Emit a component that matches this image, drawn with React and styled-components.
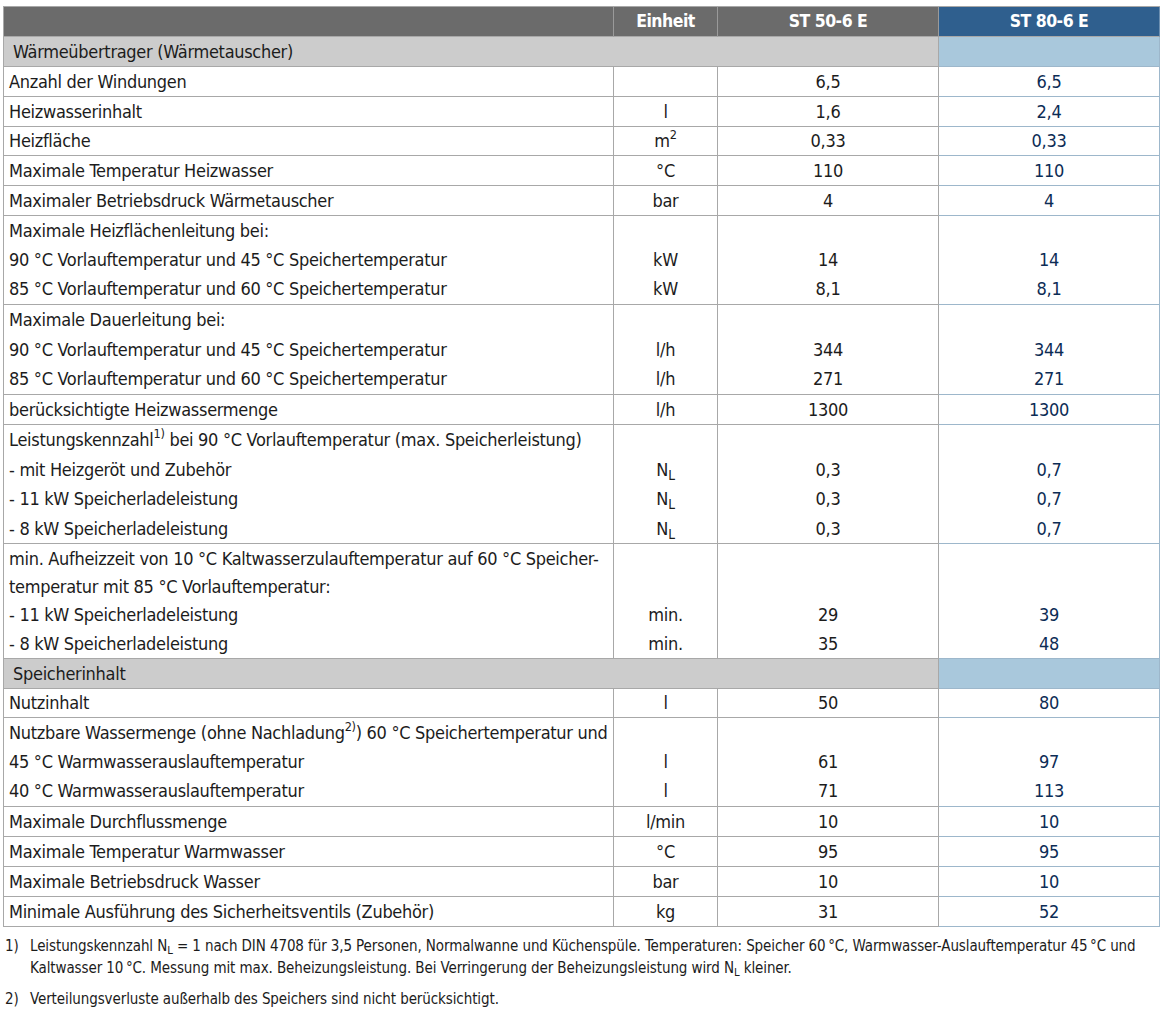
import styled, { createGlobalStyle } from 'styled-components'

const GlobalStyle = createGlobalStyle`
    body {
        margin: 0;
        background: #fff;
        font-family: "Liberation Sans Narrow", "DejaVu Sans Condensed", Roboto, sans-serif;
        color: #1c1c1c;
    }
`

const Page = styled.div`
    padding: 6px 4px 0 3px;
    width: 1157px;
`

const Table = styled.div`
    border-top: 1px solid #a8a8a8;
    border-left: 1px solid #a8a8a8;
`

const Row = styled.div`
    display: grid;
    grid-template-columns: 610px 104px 221px 221px;
`

const HeadCell = styled.div`
    height: 29px;
    background: ${p => p.blue ? '#2f5f8e' : '#6b6b6b'};
    border-right: 1px solid ${p => p.blue ? '#6d8fb0' : '#9a9a9a'};
    border-bottom: 1px solid #a8a8a8;
    color: #fff;
    font-weight: bold;
    font-size: 17.5px;
    letter-spacing: -0.5px;
    line-height: 29px;
    text-align: center;
`

const SectionCell = styled.div`
    grid-column: ${p => p.wide ? '1 / 4' : 'auto'};
    height: 29px;
    background: ${p => p.blue ? '#a9c8dc' : '#cccccc'};
    border-right: 1px solid ${p => p.blue ? '#9db7cb' : '#a8a8a8'};
    border-bottom: 1px solid ${p => p.blue ? '#9db7cb' : '#a8a8a8'};
    padding-left: 9px;
    font-size: 18px;
    letter-spacing: -0.3px;
    line-height: 29px;
`

const Cell = styled.div`
    border-right: 1px solid ${p => p.blue ? '#9db7cb' : '#a8a8a8'};
    border-bottom: 1px solid ${p => p.blue ? '#9db7cb' : '#a8a8a8'};
    padding-left: ${p => p.left ? '5px' : '0'};
    text-align: ${p => p.left ? 'left' : 'center'};
    color: ${p => p.blue ? '#0c2c55' : '#1c1c1c'};
    font-size: 18px;
    letter-spacing: -0.3px;
`

const Line = styled.div`
    height: ${p => p.h}px;
    line-height: ${p => p.h}px;
    white-space: nowrap;
`

const Sup = styled.sup`
    font-size: 0.7em;
    vertical-align: 0.6em;
    line-height: 0;
`

const Sub = styled.sub`
    font-size: 0.75em;
    vertical-align: -0.3em;
    line-height: 0;
`

const Notes = styled.div`
    width: 1140px;
    padding: 8px 0 0 2px;
    font-size: 15px;
    letter-spacing: -0.1px;
    line-height: 22px;
`

const Note = styled.div`
    display: grid;
    grid-template-columns: 25px 1fr;
    margin-bottom: 9px;
`

const NL = () => <>N<Sub>L</Sub></>

const rows = [
    { section: 'Wärmeübertrager (Wärmetauscher)' },
    { h: [29], lines: [['Anzahl der Windungen', '', '6,5', '6,5']] },
    { h: [29], lines: [['Heizwasserinhalt', 'l', '1,6', '2,4']] },
    { h: [28], lines: [['Heizfläche', <>m<Sup>2</Sup></>, '0,33', '0,33']] },
    { h: [29], lines: [['Maximale Temperatur Heizwasser', '°C', '110', '110']] },
    { h: [29], lines: [['Maximaler Betriebsdruck Wärmetauscher', 'bar', '4', '4']] },
    {
        h: [29, 29, 30],
        lines: [
            ['Maximale Heizflächenleitung bei:', '', '', ''],
            ['90 °C Vorlauftemperatur und 45 °C Speichertemperatur', 'kW', '14', '14'],
            ['85 °C Vorlauftemperatur und 60 °C Speichertemperatur', 'kW', '8,1', '8,1'],
        ],
    },
    {
        h: [30, 29, 30],
        lines: [
            ['Maximale Dauerleitung bei:', '', '', ''],
            ['90 °C Vorlauftemperatur und 45 °C Speichertemperatur', 'l/h', '344', '344'],
            ['85 °C Vorlauftemperatur und 60 °C Speichertemperatur', 'l/h', '271', '271'],
        ],
    },
    { h: [29], lines: [['berücksichtigte Heizwassermenge', 'l/h', '1300', '1300']] },
    {
        h: [30, 29, 30, 29],
        lines: [
            [<>Leistungskennzahl<Sup>1)</Sup> bei 90 °C Vorlauftemperatur (max. Speicherleistung)</>, '', '', ''],
            ['- mit Heizgeröt und Zubehör', <NL />, '0,3', '0,7'],
            ['- 11 kW Speicherladeleistung', <NL />, '0,3', '0,7'],
            ['- 8 kW Speicherladeleistung', <NL />, '0,3', '0,7'],
        ],
    },
    {
        h: [29, 27, 29, 29],
        lines: [
            ['min. Aufheizzeit von 10 °C Kaltwasserzulauftemperatur auf 60 °C Speicher-', '', '', ''],
            ['temperatur mit 85 °C Vorlauftemperatur:', '', '', ''],
            ['- 11 kW Speicherladeleistung', 'min.', '29', '39'],
            ['- 8 kW Speicherladeleistung', 'min.', '35', '48'],
        ],
    },
    { section: 'Speicherinhalt' },
    { h: [28], lines: [['Nutzinhalt', 'l', '50', '80']] },
    {
        h: [29, 29, 30],
        lines: [
            [<>Nutzbare Wassermenge (ohne Nachladung<Sup>2)</Sup>) 60 °C Speichertemperatur und</>, '', '', ''],
            ['45 °C Warmwasserauslauftemperatur', 'l', '61', '97'],
            ['40 °C Warmwasserauslauftemperatur', 'l', '71', '113'],
        ],
    },
    { h: [29], lines: [['Maximale Durchflussmenge', 'l/min', '10', '10']] },
    { h: [29], lines: [['Maximale Temperatur Warmwasser', '°C', '95', '95']] },
    { h: [29], lines: [['Maximale Betriebsdruck Wasser', 'bar', '10', '10']] },
    { h: [29], lines: [['Minimale Ausführung des Sicherheitsventils (Zubehör)', 'kg', '31', '52']] },
]

const App = () => {
    return (
        <Page>
            <GlobalStyle />
            <Table>
                <Row>
                    <HeadCell />
                    <HeadCell>Einheit</HeadCell>
                    <HeadCell>ST 50-6 E</HeadCell>
                    <HeadCell blue>ST 80-6 E</HeadCell>
                </Row>
                {rows.map((row, i) => row.section ? (
                    <Row key={i}>
                        <SectionCell wide>{row.section}</SectionCell>
                        <SectionCell blue />
                    </Row>
                ) : (
                    <Row key={i}>
                        {[0, 1, 2, 3].map(col => (
                            <Cell key={col} left={col === 0} blue={col === 3}>
                                {row.lines.map((line, j) => (
                                    <Line key={j} h={row.h[j]}>{line[col]}</Line>
                                ))}
                            </Cell>
                        ))}
                    </Row>
                ))}
            </Table>
            <Notes>
                <Note>
                    <span>1)</span>
                    <span>
                        Leistungskennzahl <NL /> = 1 nach DIN 4708 für 3,5 Personen, Normalwanne und Küchenspüle. Temperaturen: Speicher 60{'\u2009'}°C, Warmwasser-Auslauftemperatur 45{'\u2009'}°C und Kaltwasser 10{'\u2009'}°C. Messung mit max. Beheizungsleistung. Bei Verringerung der Beheizungsleistung wird <NL /> kleiner.
                    </span>
                </Note>
                <Note>
                    <span>2)</span>
                    <span>Verteilungsverluste außerhalb des Speichers sind nicht berücksichtigt.</span>
                </Note>
            </Notes>
        </Page>
    )
}

export default App
